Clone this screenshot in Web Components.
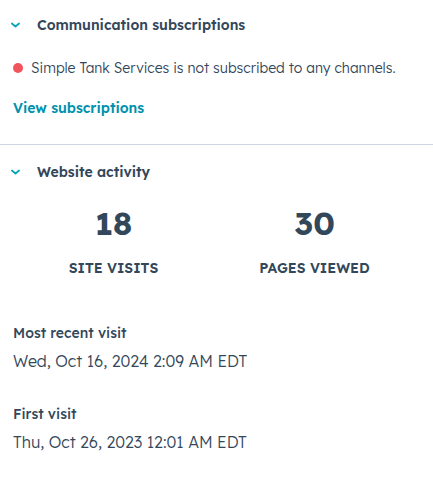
<!DOCTYPE html>
<html lang="en">
<head>
  <meta charset="utf-8">
  <meta name="viewport" content="width=device-width, initial-scale=1">
  <title>Contact record</title>
  <style>
    body {
      margin: 0;
      background: #ffffff;
      color: #33475b;
      font-family: "Lexend Deca", Inter, "Open Sans", sans-serif;
      font-size: 14px;
      line-height: 24px;
    }

    side-panel + side-panel {
      padding-top: 15px;
      border-top: 1px solid #cbd6e2;
    }
  </style>
</head>
<body>
  <main>
    <side-panel heading="Communication subscriptions">
      <status-line>Simple Tank Services is not subscribed to any channels.</status-line>
      <text-link href="#subscriptions">View subscriptions</text-link>
    </side-panel>

    <side-panel heading="Website activity">
      <activity-stats></activity-stats>
      <visit-dates></visit-dates>
    </side-panel>
  </main>

  <script>
    /* Collapsible section with a chevron */
    class SidePanel extends HTMLElement {
      constructor() {
        super();
        this.attachShadow({ mode: "open" });

        this.shadowRoot.innerHTML = `
          <style>
            :host {
              display: block;
              padding: 13px 18px 24px 13px;
            }

            h2 {
              margin: 0;
              font-size: inherit;
            }

            button {
              display: flex;
              align-items: center;
              gap: 16px;
              margin-left: -3px;
              padding: 0;
              border: 0;
              background: none;
              color: inherit;
              font: inherit;
              font-weight: 600;
              cursor: pointer;
            }

            svg {
              width: 11px;
              height: 8px;
            }

            button[aria-expanded="false"] svg {
              transform: rotate(-90deg);
            }
          </style>

          <h2>
            <button type="button" aria-expanded="true" aria-controls="content">
              <svg viewBox="0 0 11 8" aria-hidden="true">
                <path d="M1.9 2.5 L5.5 5.5 L9.1 2.5" fill="none" stroke="#00a4bd" stroke-width="1.7" stroke-linecap="round" stroke-linejoin="round"/>
              </svg>
              <span></span>
            </button>
          </h2>
          <div id="content"><slot></slot></div>
        `;
      }

      connectedCallback() {
        const button = this.shadowRoot.querySelector("button");
        const content = this.shadowRoot.querySelector("#content");

        button.querySelector("span").textContent = this.getAttribute("heading");

        button.addEventListener("click", () => {
          content.hidden = !content.hidden;
          button.setAttribute("aria-expanded", String(!content.hidden));
        });
      }
    }

    class StatusLine extends HTMLElement {
      constructor() {
        super();
        this.attachShadow({ mode: "open" });

        this.shadowRoot.innerHTML = `
          <style>
            :host {
              display: flex;
              align-items: center;
              gap: 8px;
              margin-top: 19px;
              font-weight: 300;
            }

            .dot {
              flex: none;
              width: 10px;
              height: 10px;
              border-radius: 50%;
              background: #f2545b;
            }
          </style>

          <span class="dot"></span>
          <span><slot></slot></span>
        `;
      }
    }

    class TextLink extends HTMLElement {
      constructor() {
        super();
        this.attachShadow({ mode: "open" });

        this.shadowRoot.innerHTML = `
          <style>
            :host {
              display: block;
              margin-top: 16px;
            }

            a {
              color: #0091ae;
              font-weight: 600;
              text-decoration: none;
            }

            a:hover {
              text-decoration: underline;
            }
          </style>

          <a><slot></slot></a>
        `;
      }

      connectedCallback() {
        this.shadowRoot.querySelector("a").href = this.getAttribute("href");
      }
    }

    class ActivityStats extends HTMLElement {
      constructor() {
        super();
        this.attachShadow({ mode: "open" });

        const stats = [
          { label: "SITE VISITS", value: 18 },
          { label: "PAGES VIEWED", value: 30 }
        ];

        this.shadowRoot.innerHTML = `
          <style>
            :host {
              display: block;
              margin-top: 19px;
            }

            dl {
              display: grid;
              grid-template-columns: 1fr 1fr;
              margin: 0;
              text-align: center;
            }

            .stat {
              display: flex;
              flex-direction: column-reverse;
              gap: 13px;
            }

            dt {
              font-weight: 600;
            }

            dd {
              margin: 0;
              font-size: 32px;
              font-weight: 700;
              line-height: 40px;
            }
          </style>

          <dl>
            ${stats.map((s) => `<div class="stat"><dt>${s.label}</dt><dd>${s.value}</dd></div>`).join("")}
          </dl>
        `;
      }
    }

    class VisitDates extends HTMLElement {
      constructor() {
        super();
        this.attachShadow({ mode: "open" });

        const visits = [
          { label: "Most recent visit", date: "Wed, Oct 16, 2024 2:09 AM EDT" },
          { label: "First visit", date: "Thu, Oct 26, 2023 12:01 AM EDT" }
        ];

        this.shadowRoot.innerHTML = `
          <style>
            :host {
              display: block;
              margin-top: 41px;
            }

            dl {
              display: grid;
              gap: 29px;
              margin: 0;
            }

            dt {
              font-weight: 500;
            }

            dd {
              margin: 4px 0 0;
              font-size: 16px;
              font-weight: 300;
            }
          </style>

          <dl>
            ${visits.map((v) => `<div><dt>${v.label}</dt><dd>${v.date}</dd></div>`).join("")}
          </dl>
        `;
      }
    }

    customElements.define("side-panel", SidePanel);
    customElements.define("status-line", StatusLine);
    customElements.define("text-link", TextLink);
    customElements.define("activity-stats", ActivityStats);
    customElements.define("visit-dates", VisitDates);
  </script>
</body>
</html>
